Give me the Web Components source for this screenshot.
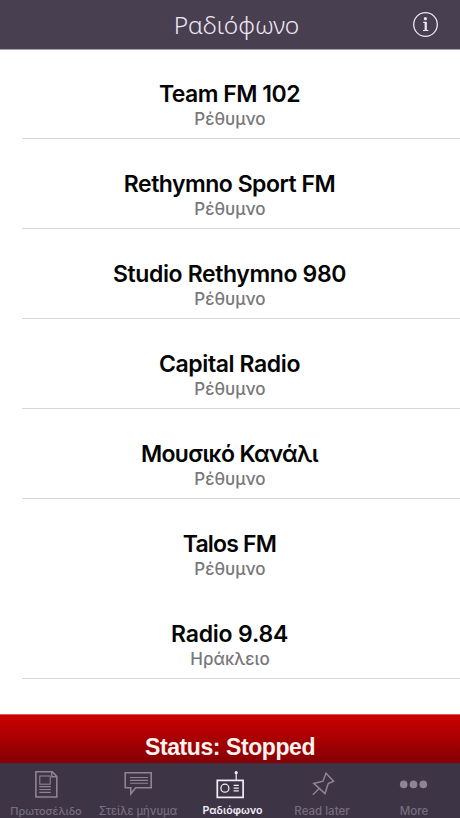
<!DOCTYPE html>
<html lang="el">
<head>
<meta charset="utf-8">
<title>Ραδιόφωνο</title>
<style>
  html, body { margin: 0; height: 100%; }
  body { background: #fff; font-family: Inter, "Liberation Sans", sans-serif; overflow: hidden; }
</style>
</head>
<body>
<radio-app></radio-app>

<script>
'use strict';

(function() {
  // Shared helper: attaches an open shadow root and fills it
  function render(host, html) {
    host.attachShadow({ mode: 'open' }).innerHTML = html;
  }

  class NavBar extends HTMLElement {
    constructor() {
      super();
      render(this, `
        <style>
          :host {
            display: grid;
            grid-template-columns: 70px 1fr 70px;
            align-items: center;
            box-sizing: border-box;
            height: 50px;
            border-bottom: 1px solid #a9a5ae;
            background: #483f51;
            color: #f0e8f4;
          }
          h1 {
            grid-column: 2;
            margin: 0 0 0 13px;
            font: 300 24.5px/30px "Noto Sans", sans-serif;
            text-align: center;
            white-space: nowrap;
          }
          svg { display: block; margin-left: 22px; }
        </style>
        <h1><slot></slot></h1>
        <svg width="27" height="27" viewBox="0 0 27 27" fill="none" stroke="#efe7f2" stroke-width="1.3">
          <circle cx="13.5" cy="13.5" r="11.8"/>
          <circle cx="13.4" cy="7.7" r="1.6" fill="#efe7f2" stroke="none"/>
          <path d="M11.2 11.3H14V19.3M11 19.5H16.4" stroke-width="1.2"/>
          <path d="M13.6 11V19.5" stroke-width="2"/>
        </svg>
      `);
    }
  }

  class StationRow extends HTMLElement {
    constructor() {
      super();
      render(this, `
        <style>
          :host {
            display: block;
            box-sizing: border-box;
            height: 90px;
            padding-top: 31px;
            margin-left: 22px;
            border-bottom: 1px solid #d8d8da;
            color: #050505;
            text-align: center;
          }
          :host([plain]) { border-color: transparent; }
          div { margin-left: -23px; white-space: nowrap; }
          .name { font-size: 23px; font-weight: 600; line-height: 28px; letter-spacing: var(--tracking, -0.5px); }
          .city { margin-left: -22px; font-size: 17px; font-weight: 500; line-height: 22px; color: #77777a; }
        </style>
        <div class="name"><slot></slot></div>
        <div class="city"><slot name="city"></slot></div>
      `);
    }
  }

  class StatusBar extends HTMLElement {
    constructor() {
      super();
      render(this, `
        <style>
          :host {
            display: block;
            box-sizing: border-box;
            height: 49px;
            padding-top: 18px;
            border-top: 1px solid #e05a5a;
            background: linear-gradient(#cb0000, #850005);
            color: #fff4ee;
            font: bold 23px/28px "Liberation Sans", sans-serif;
            letter-spacing: -0.42px;
            text-align: center;
          }
        </style>
        <slot></slot>
      `);
    }
  }

  // Line icons for the tabs, all drawn in a 36x30 box
  const icons = {
    news: `
      <path d="M7.9 2.8H24.2L28.8 7.4V28H7.9Z" stroke-width="1.6"/>
      <path d="M23.8 3V7.7H28.6" stroke-width="1.4"/>
      <rect x="11.8" y="7" width="10.4" height="8.2" stroke-width="1.1"/>
      <path d="M11.3 17.6H22.8M11.3 20.5H22.8M11.3 23.4H22.8" stroke-width="1.1"/>`,
    message: `
      <path d="M5.2 3.8H31.2V18.8H15.6L10.8 25V18.8H5.2Z" stroke-width="1.6"/>
      <path d="M10 8.5H28M10 11.4H28M10 14.3H28" stroke-width="1.1"/>`,
    radio: `
      <rect x="5.3" y="11.4" width="25.8" height="17" stroke-width="1.7"/>
      <circle cx="12.9" cy="19.2" r="4" stroke-width="1.3"/>
      <path d="M21.6 16.4H26.8M21.6 19.1H26.8M21.6 21.8H26.8" stroke-width="1.3"/>
      <path d="M24.2 11V4" stroke-width="1.2"/>
      <circle cx="24.2" cy="3.7" r="1.6" fill="currentColor" stroke="none"/>`,
    pin: `
      <path d="M22 4.2L29.6 12.2L24.2 14.6L21 24.6L9.8 14.4L19 12.2Z" stroke-width="1.5"/>
      <path d="M15.2 19.4L8.9 25.7" stroke-width="1.4"/>`,
    more: `
      <g fill="currentColor" stroke="none">
        <circle cx="7.7" cy="15.4" r="3.8"/>
        <circle cx="17.5" cy="15.4" r="3.8"/>
        <circle cx="27.3" cy="15.4" r="3.8"/>
      </g>`
  };

  class TabItem extends HTMLElement {
    constructor() {
      super();
      const icon = icons[this.getAttribute('icon')] || '';
      render(this, `
        <style>
          :host {
            display: flex;
            flex-direction: column;
            align-items: center;
            padding-top: 6px;
            color: #8e8495;
          }
          :host([active]) { color: #f4edf7; }
          svg { display: block; }
          span {
            margin-top: 5px;
            font: 500 var(--label-size, 11.5px)/14px Inter, sans-serif;
            white-space: nowrap;
            color: #776e7e;
          }
          :host([active]) span { margin-left: 5px; color: #f4edf7; font-weight: 600; }
        </style>
        <svg width="36" height="30" viewBox="0 0 36 30" fill="none" stroke="currentColor">${icon}</svg>
        <span><slot></slot></span>
      `);
    }
  }

  class TabBar extends HTMLElement {
    constructor() {
      super();
      render(this, `
        <style>
          :host {
            display: grid;
            grid-template-columns: repeat(5, 92px);
            height: 55px;
            background: #3d3446;
            overflow: hidden;
          }
        </style>
        <slot></slot>
      `);
    }
  }

  class RadioApp extends HTMLElement {
    constructor() {
      super();
      render(this, `
        <style>
          :host { display: flex; flex-direction: column; height: 818px; }
          main { flex: 1; min-height: 0; overflow: hidden; margin-top: -1px; }
        </style>
        <nav-bar>Ραδιόφωνο</nav-bar>
        <main>
          <station-row>Team FM 102<span slot="city">Ρέθυμνο</span></station-row>
          <station-row>Rethymno Sport FM<span slot="city">Ρέθυμνο</span></station-row>
          <station-row style="--tracking: -0.37px">Studio Rethymno 980<span slot="city">Ρέθυμνο</span></station-row>
          <station-row style="--tracking: -0.4px">Capital Radio<span slot="city">Ρέθυμνο</span></station-row>
          <station-row style="--tracking: -0.65px">Μουσικό Κανάλι<span slot="city">Ρέθυμνο</span></station-row>
          <station-row style="--tracking: -0.8px" plain>Talos FM<span slot="city">Ρέθυμνο</span></station-row>
          <station-row style="--tracking: -0.2px">Radio 9.84<span slot="city">Ηράκλειο</span></station-row>
        </main>
        <status-bar>Status: Stopped</status-bar>
        <tab-bar>
          <tab-item icon="news" style="--label-size: 10.9px">Πρωτοσέλιδο</tab-item>
          <tab-item icon="message" style="--label-size: 11.1px">Στείλε μήνυμα</tab-item>
          <tab-item icon="radio" style="--label-size: 10.7px" active>Ραδιόφωνο</tab-item>
          <tab-item icon="pin">Read later</tab-item>
          <tab-item icon="more">More</tab-item>
        </tab-bar>
      `);
    }
  }

  customElements.define('nav-bar', NavBar);
  customElements.define('station-row', StationRow);
  customElements.define('status-bar', StatusBar);
  customElements.define('tab-item', TabItem);
  customElements.define('tab-bar', TabBar);
  customElements.define('radio-app', RadioApp);
})();
</script>
</body>
</html>
